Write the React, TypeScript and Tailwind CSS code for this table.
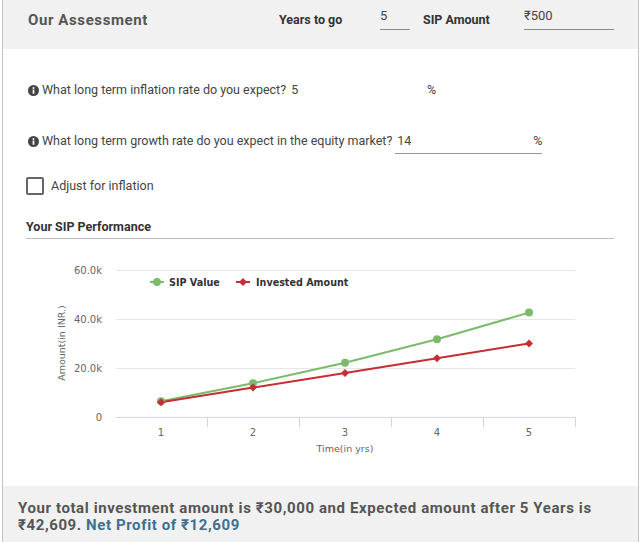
const font = { fontFamily: 'Roboto, "Noto Sans", Arial, sans-serif' };

const sip = [6446, 13794, 22170, 31720, 42609];
const invested = [6000, 12000, 18000, 24000, 30000];
const xs = [161, 253, 345, 437, 529];
const yOf = (v: number) => 417 - v * (147 / 60000);

function InfoIcon() {
  return (
    <svg width="11" height="11" viewBox="0 0 16 16" className="shrink-0">
      <circle cx="8" cy="8" r="8" fill="#444" />
      <circle cx="8" cy="4.4" r="1.4" fill="#fff" />
      <rect x="6.8" y="6.6" width="2.4" height="6.2" fill="#fff" />
    </svg>
  );
}

function Chart() {
  const sipPts = xs.map((x, i) => `${x},${yOf(sip[i])}`).join(' ');
  const invPts = xs.map((x, i) => `${x},${yOf(invested[i])}`).join(' ');
  const label = { fontFamily: '"DejaVu Sans", Verdana, sans-serif' };
  return (
    <svg width="590" height="215" className="block">
      <g transform="translate(-26,-250)" style={label}>
        {[270, 319, 368].map((y) => (
          <line key={y} x1="116" x2="575" y1={y + 0.5} y2={y + 0.5} stroke="#e6e6e6" />
        ))}
        <line x1="116" x2="575" y1="417.5" y2="417.5" stroke="#ccd6eb" />
        {[207, 299, 391, 483, 575].map((x) => (
          <line key={x} x1={x + 0.5} x2={x + 0.5} y1="417" y2="427" stroke="#ccd6eb" />
        ))}
        {[['60.0k', 270], ['40.0k', 319], ['20.0k', 368], ['0', 417]].map(([t, y]) => (
          <text key={t} x="102" y={(y as number) + 4} textAnchor="end" fontSize="10" fill="#666">
            {t}
          </text>
        ))}
        {xs.map((x, i) => (
          <text key={x} x={x} y="436" textAnchor="middle" fontSize="10" fill="#666">
            {i + 1}
          </text>
        ))}
        <text x="345" y="452" textAnchor="middle" fontSize="9.5" fill="#666">
          Time(in yrs)
        </text>
        <text
          x="0"
          y="0"
          transform="translate(65,343) rotate(-90)"
          textAnchor="middle"
          fontSize="9.5"
          fill="#666"
        >
          Amount(in INR.)
        </text>

        <polyline points={sipPts} fill="none" stroke="#7cba6c" strokeWidth="2" />
        <polyline points={invPts} fill="none" stroke="#c52e33" strokeWidth="2" />
        {xs.map((x, i) => (
          <circle key={x} cx={x} cy={yOf(sip[i])} r="4" fill="#7cba6c" />
        ))}
        {xs.map((x, i) => {
          const y = yOf(invested[i]);
          return (
            <polygon
              key={x}
              points={`${x},${y - 4} ${x + 4},${y} ${x},${y + 4} ${x - 4},${y}`}
              fill="#c52e33"
            />
          );
        })}

        {/* legend */}
        <line x1="150" x2="164" y1="282" y2="282" stroke="#7cba6c" strokeWidth="2" />
        <circle cx="157" cy="282" r="4" fill="#7cba6c" />
        <text x="169" y="286" fontSize="9.6" fontWeight="bold" fill="#333">
          SIP Value
        </text>
        <line x1="236" x2="250" y1="282" y2="282" stroke="#c52e33" strokeWidth="2" />
        <polygon points="243,278 247,282 243,286 239,282" fill="#c52e33" />
        <text x="256" y="286" fontSize="9.6" fontWeight="bold" fill="#333">
          Invested Amount
        </text>
      </g>
    </svg>
  );
}

export default function App() {
  return (
    <div className="w-[641px] h-[542px] bg-white overflow-hidden" style={font}>
      <div className="ml-[2px] w-[637px] h-[542px] border-x border-[#c4c4c4] flex flex-col">
        {/* Header */}
        <div className="h-[49px] shrink-0 bg-[#f1f1f1] flex items-start pl-[25px]">
          <div className="mt-[11px] w-[251px] text-[15px] leading-[18px] font-bold tracking-[0.6px] text-[#555]">
            Our Assessment
          </div>
          <div className="mt-[12px] w-[101px] text-[12.5px] leading-[16px] font-bold text-[#333]">Years to go</div>
          <div className="mt-[8px] w-[30px] h-[22px] border-b border-[#888] text-[13px] text-[#444] leading-[16px]">
            5
          </div>
          <div className="mt-[12px] w-[114px] pl-[13px] text-[12.5px] leading-[16px] font-bold text-[#333]">
            SIP Amount
          </div>
          <div className="mt-[8px] w-[90px] h-[22px] border-b border-[#888] text-[13px] text-[#444] leading-[16px]">
            ₹500
          </div>
        </div>

        {/* Body */}
        <div className="flex-1 px-[23px] text-[12.5px] text-[#444]">
          <div className="mt-[31px] h-[20px] flex items-center pl-[2px] gap-[3px]">
            <InfoIcon />
            <span>What long term inflation rate do you expect?</span>
            <div className="w-[147px] flex justify-between pl-[2px]">
              <span>5</span>
              <span>%</span>
            </div>
          </div>

          <div className="mt-[31px] h-[22px] flex items-start pl-[2px] gap-[3px]">
            <div className="flex items-center gap-[3px] h-[20px]">
              <InfoIcon />
              <span>What long term growth rate do you expect in the equity market?</span>
            </div>
            <div className="w-[147px] h-[23px] border-b border-[#999] flex justify-between leading-[20px] pl-[2px]">
              <span>14</span>
              <span>%</span>
            </div>
          </div>

          <label className="mt-[23px] flex items-center gap-[7px] h-[20px]">
            <span className="w-[18px] h-[18px] border-2 border-[#666] rounded-[2px] bg-white" />
            <span>Adjust for inflation</span>
          </label>

          <div className="mt-[21px] h-[22px] border-b border-[#bbb] font-bold text-[#333] leading-[20px] w-[588px]">
            Your SIP Performance
          </div>

          <div className="mt-[11px]">
            <Chart />
          </div>
        </div>

        {/* Footer */}
        <div className="h-[56px] shrink-0 bg-[#f1f1f1] px-[15px] pt-[14px] text-[15px] font-bold tracking-[0.6px] leading-[17px] text-[#555]">
          Your total investment amount is ₹30,000 and Expected amount after 5 Years is ₹42,609. <span className="text-[#3f6f91]">Net Profit of ₹12,609</span>
        </div>
      </div>
    </div>
  );
}
